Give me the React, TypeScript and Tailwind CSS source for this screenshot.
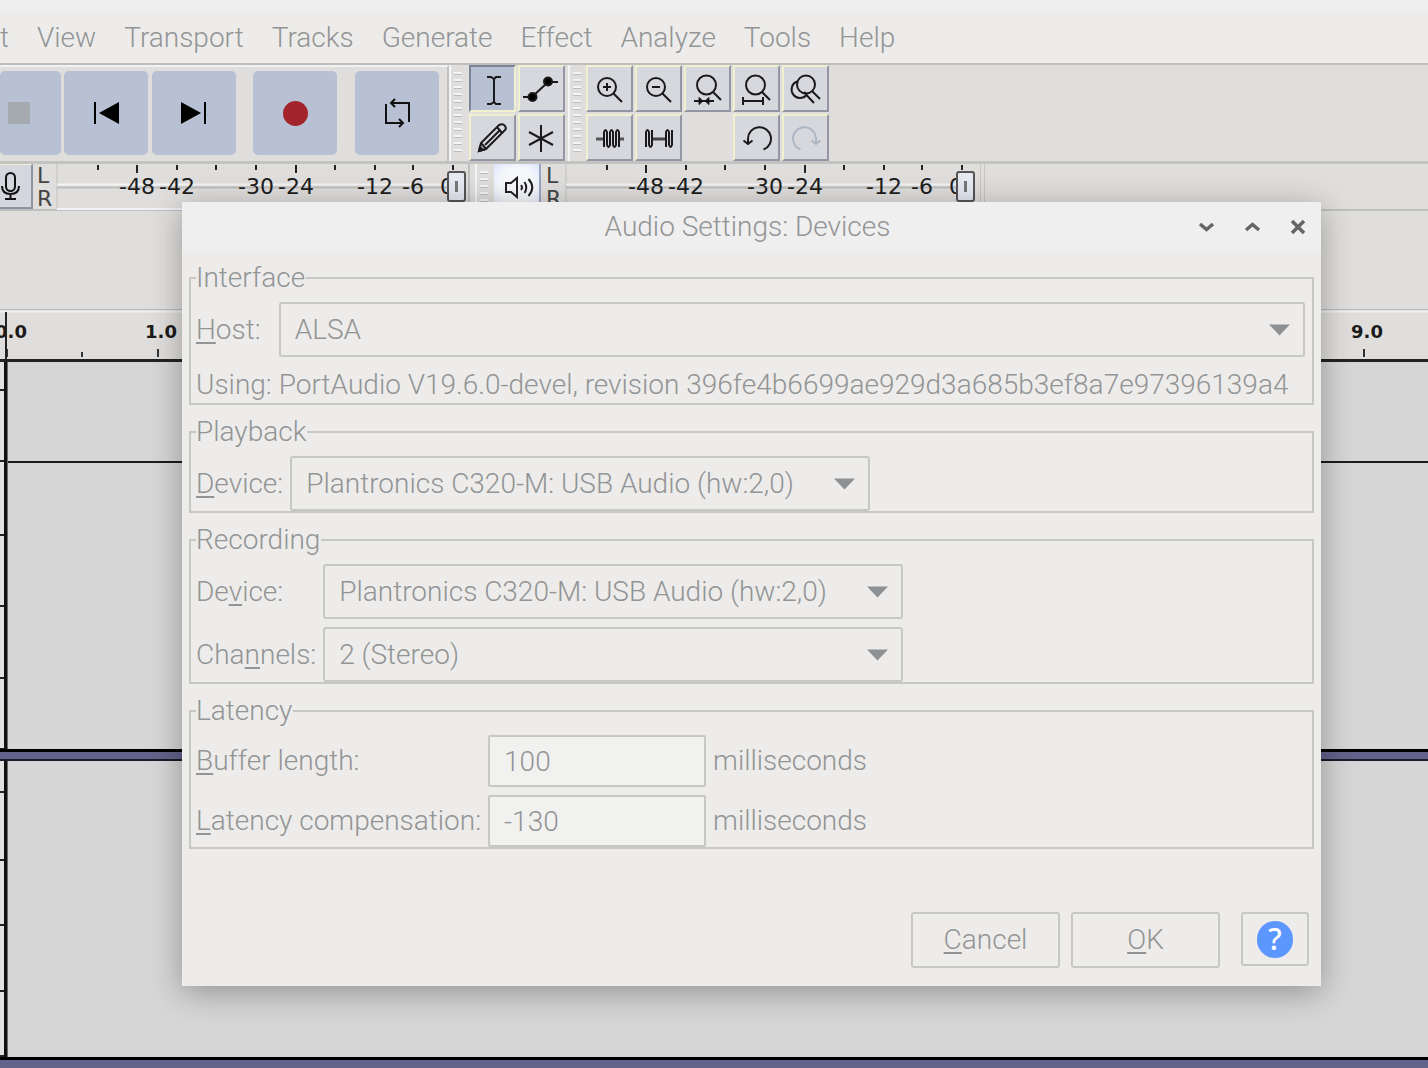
import { useId, type ReactNode } from "react";

const MENUS = ["t", "View", "Transport", "Tracks", "Generate", "Effect", "Analyze", "Tools", "Help"];

function TransportButton({ label, className = "w-[84px] justify-center", children }: { label: string; className?: string; children: ReactNode }) {
  return (
    <button aria-label={label} className={`flex h-[84px] shrink-0 items-center rounded-[5px] bg-[#b7c1d3] ${className}`}>
      {children}
    </button>
  );
}

function ToolButton({ label, selected = false, children }: { label: string; selected?: boolean; children: ReactNode }) {
  const look = selected
    ? "border-t-[#7c8597] border-l-[#7c8597] border-b-[#f1f1cf] border-r-[#f1f1cf] bg-[#b7c1d3]"
    : "border-t-[#f1f1cf] border-l-[#f1f1cf] border-b-[#9497a3] border-r-[#9497a3] bg-[#d6d8de]";
  return (
    <button aria-label={label} className={`flex h-[47px] w-[47px] items-center justify-center border-2 ${look}`}>
      <svg width="43" height="43" viewBox="0 0 43 43" fill="none" stroke="#1a1a1a" strokeWidth="2">
        {children}
      </svg>
    </button>
  );
}

function Grip({ rows }: { rows: number }) {
  return (
    <div className="flex w-4 shrink-0 flex-col items-center gap-[4px] overflow-hidden border-l-2 border-[#f4f4f6] pt-[7px]">
      {Array.from({ length: rows }, (_, i) => (
        <div key={i} className="h-[3px] w-2 shrink-0 border-t-2 border-b border-t-[#f4f4f6] border-b-[#bdbdbd]" />
      ))}
    </div>
  );
}

const METER_TICKS = [42, 81, 121, 160, 200, 240, 279, 319, 357, 397];
const METER_LABELS: [number, string][] = [
  [81, "-48"],
  [121, "-42"],
  [200, "-30"],
  [240, "-24"],
  [319, "-12"],
  [357, "-6"],
  [391, "0"],
];

function Meter({ label }: { label: string }) {
  return (
    <div className="flex shrink-0 font-normal">
      <div className="flex w-[19px] flex-col font-['DejaVu_Sans',sans-serif] text-[22px] leading-[23px] text-[#444]">
        <span>L</span>
        <span>R</span>
      </div>
      <div className="relative">
        <svg width="412" height="46" viewBox="0 0 412 46" role="img" aria-label={label}>
          <path d="M1 0V44" stroke="#c0c0c0" />
          <path d="M1 20.500H400" stroke="#f3f3f6" strokeWidth="2" />
          <path d="M1 23.500H400" stroke="#bdbdbd" strokeWidth="2" />
          <path d="M1 45H408" stroke="#f1f2f8" strokeWidth="2" />
          {METER_TICKS.map((x, i) => (
            <path key={x} d={`M${x} 1V${i === 1 || i === 5 ? 9 : 6}`} stroke="#222" strokeWidth="2" />
          ))}
          {METER_LABELS.map(([x, t]) => (
            <text key={t} x={x} y="30" textAnchor="middle" fontSize="22" fontFamily="DejaVu Sans" fill="#1c1c1c">
              {t}
            </text>
          ))}
        </svg>
        <input
          type="range"
          aria-label={`${label} level`}
          defaultValue={100}
          className="absolute top-[7px] right-[2px] h-[31px] w-[19px] appearance-none rounded-[3px] border-2 border-[#555] bg-[#e6e9f2] bg-[linear-gradient(90deg,transparent_6px,#777_6px,#777_9px,transparent_9px)] bg-[length:15px_11px] bg-center bg-no-repeat [&::-webkit-slider-thumb]:appearance-none"
        />
      </div>
    </div>
  );
}

function Ruler() {
  const ticks = Array.from({ length: 20 }, (_, i) => i);
  return (
    <svg className="block w-full" height="50" aria-label="Timeline" role="img">
      <path d="M0 0.500H3000" stroke="#bcbcbc" strokeWidth="2" />
      <path d="M0 2.500H3000" stroke="#f1f1f1" strokeWidth="2" />
      {ticks.map((i) => (
        <path key={i} d={`M${7 + Math.round(i * 75.4)} ${i % 2 ? 43 : 40}V48`} stroke="#333" strokeWidth="2" />
      ))}
      {[["0.0", 11], ["1.0", 161], ["9.0", 1367]].map(([t, x]) => (
        <text key={t} x={x} y="29" textAnchor="middle" fontSize="18" fontWeight="700" fontFamily="DejaVu Sans" fill="#1a1a1a">
          {t}
        </text>
      ))}
      <path d="M6 3V50" stroke="#222" strokeWidth="2" />
    </svg>
  );
}

function Track({ height, ticks, midline }: { height: string; ticks: number[]; midline?: boolean }) {
  return (
    <div className={`flex border-b-[3px] border-black ${height}`}>
      <svg width="4" height="100%" className="shrink-0 bg-[#e2e2e0]">
        {ticks.map((y) => (
          <path key={y} d={`M0 ${y}H4`} stroke="#222" strokeWidth="2" />
        ))}
      </svg>
      <div className="w-[4px] shrink-0 border-r border-[#6a6a6a] bg-[#111]" />
      <div className="flex-1 bg-[#d6d6d6]">{midline && <div className="h-[101px] border-b-2 border-[#1c1c1c]" />}</div>
    </div>
  );
}

function Key({ text, mnemonic }: { text: string; mnemonic: number }) {
  return (
    <>
      {text.slice(0, mnemonic)}
      <span className="underline decoration-2 underline-offset-[3px]">{text[mnemonic]}</span>
      {text.slice(mnemonic + 1)}
    </>
  );
}

function Group({ title, className, children }: { title: string; className: string; children: ReactNode }) {
  return (
    <fieldset className="min-w-0 border-2 border-[#c7c7c5] px-[5px]">
      <legend className="h-[34px] pr-px leading-[34px]">{title}</legend>
      <div className={`grid items-center gap-x-[7px] pt-[7px] ${className}`}>{children}</div>
    </fieldset>
  );
}

function SelectRow({ label, mnemonic, value, width }: { label: string; mnemonic: number; value: string; width: string }) {
  const id = useId();
  return (
    <>
      <label htmlFor={id} className="whitespace-nowrap">
        <Key text={label} mnemonic={mnemonic} />
      </label>
      <div className={`relative ${width}`}>
        <select id={id} className="block h-[55px] w-full appearance-none rounded-[3px] border-2 border-[#c7c7c5] bg-transparent pl-[14px]">
          <option>{value}</option>
        </select>
        <svg className="pointer-events-none absolute top-[22px] right-[15px]" width="21" height="12" viewBox="0 0 21 12">
          <path d="M0 0.500H21L10.500 11.500Z" fill="#8d9193" />
        </svg>
      </div>
    </>
  );
}

function LatencyRow({ label, value }: { label: string; value: string }) {
  const id = useId();
  return (
    <>
      <label htmlFor={id} className="whitespace-nowrap">
        <Key text={label} mnemonic={0} />
      </label>
      <input id={id} defaultValue={value} className="h-[52px] w-[218px] rounded-[2px] border-2 border-[#c7c7c5] bg-[#f1f1f0] pl-[14px]" />
      <span>milliseconds</span>
    </>
  );
}

function Dialog() {
  return (
    <section
      role="dialog"
      aria-label="Audio Settings: Devices"
      className="absolute top-[202px] left-[182px] w-[1139px] bg-[#edecea] shadow-[0_6px_30px_rgba(0,0,0,0.32)]"
    >
      <header className="flex h-12 items-center bg-[#efefef] pt-px pr-[14px] pl-[116px]">
        <h1 className="flex-1 text-center">Audio Settings: Devices</h1>
        <div className="flex gap-[28px]">
          {[
            ["Minimize", "M3 6L9.500 11.500L16 6"],
            ["Maximize", "M3 12L9.500 6.500L16 12"],
            ["Close", "M3 3L15 15M15 3L3 15"],
          ].map(([name, d]) => (
            <button key={name} aria-label={name}>
              <svg width="18" height="18" viewBox="0 0 18 18" fill="none" stroke="#666" strokeWidth="3.500">
                <path d={d} />
              </svg>
            </button>
          ))}
        </div>
      </header>
      <div className="flex flex-col gap-[10px] px-[7px] pt-[11px]">
        <Group title="Interface" className="grid-cols-[auto_1fr] pr-[2px]">
          <SelectRow label="Host:" mnemonic={0} value="ALSA" width="w-full" />
          <span className="mt-[10px] h-9 leading-9">Using:</span>
          <span className="mt-[10px] h-9 leading-9 whitespace-nowrap">
            PortAudio V19.6.0-devel, revision 396fe4b6699ae929d3a685b3ef8a7e97396139a4
          </span>
        </Group>
        <Group title="Playback" className="grid-cols-[auto_1fr]">
          <SelectRow label="Device:" mnemonic={0} value="Plantronics C320-M: USB Audio (hw:2,0)" width="w-[580px]" />
        </Group>
        <Group title="Recording" className="grid-cols-[auto_1fr] gap-y-2">
          <SelectRow label="Device:" mnemonic={2} value="Plantronics C320-M: USB Audio (hw:2,0)" width="w-[580px]" />
          <SelectRow label="Channels:" mnemonic={3} value="2 (Stereo)" width="w-[580px]" />
        </Group>
        <Group title="Latency" className="grid-cols-[auto_auto_1fr] gap-y-2">
          <LatencyRow label="Buffer length:" value="100" />
          <LatencyRow label="Latency compensation:" value="-130" />
        </Group>
      </div>
      <footer className="flex items-start justify-end gap-[11px] pt-[63px] pr-3 pb-[18px]">
        <button className="h-14 w-[149px] rounded-[3px] border-2 border-[#c7c7c5]">
          <Key text="Cancel" mnemonic={0} />
        </button>
        <button className="h-14 w-[149px] rounded-[3px] border-2 border-[#c7c7c5]">
          <Key text="OK" mnemonic={0} />
        </button>
        <button aria-label="Help" className="ml-[10px] flex h-[54px] w-[68px] items-center justify-center rounded-[3px] border-2 border-[#c7c7c5]">
          <span className="flex h-[37px] w-9 items-center justify-center rounded-full bg-[#5b97ff] font-['Noto_Sans',sans-serif] text-[30px] leading-none font-medium text-white">
            ?
          </span>
        </button>
      </footer>
    </section>
  );
}

export default function App() {
  return (
    <main className="relative flex h-screen flex-col overflow-hidden bg-[#dfdedc] font-[Roboto,sans-serif] text-[28px] leading-9 font-light text-[#929495]">
      <div className="h-3 shrink-0 bg-[#efefef]" />
      <nav className="flex h-[53px] shrink-0 items-center gap-[28px] border-b-2 border-[#bebebd] bg-[#edecea] pt-px">
        {MENUS.map((m) => (
          <button key={m} className="leading-9">
            {m}
          </button>
        ))}
      </nav>

      <div className="flex h-[99px] shrink-0 border-b-[3px] border-[#c3c3c1]">
        <div className="flex w-[449px] shrink-0 items-start border-t-2 border-r-2 border-t-[#f1f1f4] border-r-[#c0c0be] pt-1">
          <TransportButton label="Stop" className="w-[61px] pl-2">
            <svg width="22" height="22" className="shrink-0">
              <rect width="22" height="22" fill="#a5a9b0" />
            </svg>
          </TransportButton>
          <div className="ml-[3px] flex gap-1">
            <TransportButton label="Skip to start">
              <svg width="26" height="22">
                <path d="M2 0V22" stroke="#000" strokeWidth="2" />
                <path d="M26 0V22L6 11Z" />
              </svg>
            </TransportButton>
            <TransportButton label="Skip to end">
              <svg width="26" height="22">
                <path d="M24 0V22" stroke="#000" strokeWidth="2" />
                <path d="M0 0V22L20 11Z" />
              </svg>
            </TransportButton>
          </div>
          <div className="ml-[17px] flex gap-[18px]">
            <TransportButton label="Record">
              <span className="h-[25px] w-[25px] rounded-full bg-[#a3242a]" />
            </TransportButton>
            <TransportButton label="Loop">
              <svg width="28" height="30" viewBox="0 0 28 30" fill="none" stroke="#111" strokeWidth="2">
                <path d="M3 6V25H20M16 21L20 25L16 29M26 24V5H8M12 1L8 5L12 9" />
              </svg>
            </TransportButton>
          </div>
        </div>
        <div className="flex">
          <Grip rows={12} />
          <div className="grid grid-cols-2 content-start gap-[2px] pl-1">
            <ToolButton label="Selection tool" selected>
              <path d="M16 10H20L23 12L25 10H30M23 11V36M16 37H20L23 35L25 37H30" />
            </ToolButton>
            <ToolButton label="Envelope tool">
              <path d="M3 30H12L28 15H38" />
              <circle cx="12.500" cy="30" r="4" fill="#000" />
              <circle cx="28" cy="14.500" r="4" fill="#000" />
            </ToolButton>
            <ToolButton label="Draw tool">
              <path d="M8 35L10 27L28 9Q32 7 34 10Q36 13 33 15L15 33ZM26 11L31 17M10 27L15 33M28 15L14 29" />
              <path d="M8 35L9 31L12 34Z" fill="#111" />
            </ToolButton>
            <ToolButton label="Multi tool">
              <path d="M21 9V36M9 16L33 29M33 16L9 29" />
            </ToolButton>
          </div>
        </div>
        <div className="flex pl-[3px]">
          <Grip rows={12} />
          <div className="grid grid-cols-5 content-start gap-[2px] pl-[2px]">
            <ToolButton label="Zoom in">
              <circle cx="19" cy="20" r="9" />
              <path d="M25.500 26.500L34 35M15 20H23M19 16V24" />
            </ToolButton>
            <ToolButton label="Zoom out">
              <circle cx="19" cy="20" r="9" />
              <path d="M25.500 26.500L34 35M15 20H23" />
            </ToolButton>
            <ToolButton label="Fit selection">
              <circle cx="20.500" cy="18" r="9.500" />
              <path d="M27 25L35 33M8 34H28" />
              <path d="M13 30.500L17 34L13 37.500ZM23 30.500L19 34L23 37.500Z" fill="#111" strokeWidth="1" />
            </ToolButton>
            <ToolButton label="Fit project">
              <circle cx="20.500" cy="18" r="9.500" />
              <path d="M27 25L35 33M8 34H28M8 30V38M28 30V38" />
            </ToolButton>
            <ToolButton label="Zoom toggle">
              <path d="M13 14.500A8.500 8.500 0 1 0 22.500 28L30 36M20 25L23 28" />
              <circle cx="22" cy="17.500" r="9" />
              <path d="M28 24L36 32" />
            </ToolButton>
            <ToolButton label="Trim audio">
              <path d="M8 23H16M31 23H36" stroke="#555" strokeWidth="3" />
              <path d="M16 31V16Q17.500 12 19 16V29Q20.500 33 22 29V16Q23.500 12 25 16V29Q26.500 33 28 29V16Q29.500 12 31 16V31" />
            </ToolButton>
            <ToolButton label="Silence audio">
              <path d="M15 23H29" stroke="#444" strokeWidth="3" />
              <path d="M9 31V16Q10.500 12 12 16V29Q13.500 33 15 29V14M29 31V16Q30.500 12 32 16V29Q33.500 33 35 29V14" />
            </ToolButton>
            <span />
            <ToolButton label="Undo">
              <path d="M13 28V22.500A11.500 11.500 0 1 1 28.500 33.500M8.500 24.500L13 28L17.500 24.500" />
            </ToolButton>
            <ToolButton label="Redo">
              <path d="M32 28V22.500A11.500 11.500 0 1 0 16.500 33.500M36.500 24.500L32 28L27.500 24.500" stroke="#aeb5c2" />
            </ToolButton>
          </div>
        </div>
      </div>

      <div className="flex h-[47px] shrink-0 border-b-2 border-[#bfbfbd]">
        <button aria-label="Record meter" className="flex w-[33px] shrink-0 items-center border-t border-r-2 border-b-2 border-t-[#f1f1cf] border-r-[#8f92a1] border-b-[#8f92a1] bg-[#d5d7df] pl-px">
          <svg width="20" height="30" viewBox="0 0 20 30" fill="none" stroke="#111" strokeWidth="2">
            <rect x="5" y="2" width="9" height="18" rx="4.500" />
            <path d="M1 15Q1 23 9.500 23Q18 23 18 15M9.500 23V28M4 28H15" />
          </svg>
        </button>
        <div className="flex pl-1">
          <Meter label="Recording" />
        </div>
        <div className="flex border-l-2 border-[#c0c0be] pl-[5px]">
          <Grip rows={6} />
          <button aria-label="Playback meter" className="mr-[5px] ml-[3px] flex w-[47px] items-center justify-center border-r-2 border-[#9aa5c0] bg-[radial-gradient(circle,#f7f8fc_55%,#dce6fb)] pl-[6px]">
            <svg width="30" height="26" viewBox="0 0 30 26" fill="none" stroke="#222" strokeWidth="2">
              <path d="M1 9H6L12 4V23L6 18H1ZM16 11Q18 13.500 16 16M19.500 8Q23 13.500 19.500 19M23.500 5Q31 13.500 23.500 22" />
            </svg>
          </button>
          <Meter label="Playback" />
        </div>
        <div className="ml-[3px] w-[5px] border-x border-[#c6c6c4]" />
      </div>

      <div className="h-[98px] shrink-0" />
      <Ruler />
      <div className="flex flex-1 flex-col border-t-[3px] border-[#222]">
        <Track height="h-[390px]" ticks={[28, 99, 173, 244, 316, 387]} midline />
        <div className="h-[9px] shrink-0 border-b-2 border-b-[#1b1b2a] bg-[#62638a]" />
        <Track height="h-[299px]" ticks={[31, 99, 164, 230, 295]} />
        <div className="flex-1 bg-[#62638a]" />
      </div>
      <Dialog />
    </main>
  );
}
